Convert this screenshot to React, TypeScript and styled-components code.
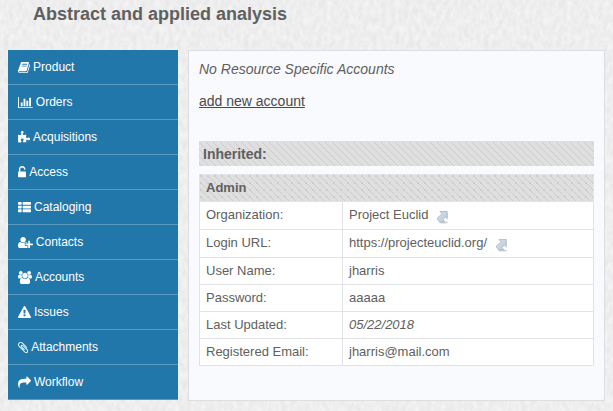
import React from "react";
import styled, { createGlobalStyle } from "styled-components";

const paper = `url("data:image/svg+xml,${encodeURIComponent(
  `<svg xmlns="http://www.w3.org/2000/svg" width="240" height="240"><filter id="n" color-interpolation-filters="sRGB"><feTurbulence type="fractalNoise" baseFrequency="0.22 0.12" numOctaves="3" stitchTiles="stitch"/><feColorMatrix values="0.08 0 0 0 0.893 0.08 0 0 0 0.893 0.08 0 0 0 0.893 0 0 0 0 1"/></filter><rect width="240" height="240" filter="url(#n)"/></svg>`
)}")`;

const hatch = `url("data:image/svg+xml,${encodeURIComponent(
  `<svg xmlns="http://www.w3.org/2000/svg" width="7" height="7"><rect width="7" height="7" fill="#dfdfdf"/><path d="M-1 -1L8 8M-1 6L1 8M6 -1L8 1" stroke="#cdcdcd" stroke-width="1"/></svg>`
)}")`;

const GlobalStyle = createGlobalStyle`
  *, *::before, *::after { box-sizing: border-box; }
  body {
    margin: 0;
    background: #eeeeee ${paper};
    color: #606060;
    font: 13px/17px "Liberation Sans", Arial, sans-serif;
  }
`;

const Page = styled.div`
  padding: 0 8px 10px;
`;

const Title = styled.h1`
  margin: 0;
  padding: 3px 0 25px 25px;
  font-size: 18px;
  line-height: 22px;
`;

const Columns = styled.div`
  display: grid;
  grid-template-columns: 170px 1fr;
  gap: 10px;
  align-items: start;
`;

const Nav = styled.nav`
  display: flex;
  flex-direction: column;
  background: #2277aa;
`;

const NavLink = styled.a`
  display: flex;
  align-items: center;
  gap: 3px;
  height: 35px;
  padding: 0 10px;
  border-bottom: 1px solid #5c9ac0;
  color: #ffffff;
  font-size: 12px;
  text-decoration: none;
`;

const Glyph = styled.svg`
  height: 13px;
  flex: none;
  fill: currentColor;
`;

const Panel = styled.main`
  display: flex;
  flex-direction: column;
  align-items: stretch;
  min-height: 351px;
  padding: 10px;
  border: 1px solid #dcdee2;
  background: #f9fafd;
`;

const Empty = styled.p`
  margin: 0 0 15px;
  font-size: 14px;
  font-style: italic;
`;

const AddLink = styled.a`
  align-self: flex-start;
  margin-bottom: 31px;
  color: #4a4a4a;
  font-size: 14px;
`;

const Inherited = styled.h2`
  margin: 0 0 8px;
  padding: 4px;
  background: ${hatch};
  border-top: 1px solid #dedede;
  font-size: 14px;
  line-height: 16px;
`;

const Details = styled.table`
  width: 100%;
  border-collapse: collapse;
  background: #ffffff;
  border: 1px solid #e2e3e6;
`;

const Head = styled.th`
  padding: 4px 6px 5px;
  border-bottom: 1px solid #e2e3e6;
  background: ${hatch};
  text-align: left;
`;

const Label = styled.th`
  width: 143px;
  padding: 4px 6px 5px;
  border: 1px solid #e2e3e6;
  font-weight: normal;
  text-align: left;
  vertical-align: top;
`;

const Value = styled.td<{ $italic?: boolean }>`
  padding: 4px 6px 5px;
  border: 1px solid #e2e3e6;
  font-style: ${(p) => (p.$italic ? "italic" : "normal")};
`;

const WithLink = styled.span`
  display: flex;
  align-items: flex-start;
  gap: 8px;
  height: 18px;
`;

const OpenLink = styled.a`
  display: block;
  height: 18px;
  padding-top: 4px;
`;

const OpenSvg = styled.svg`
  display: block;
  width: 14px;
  height: 14px;
`;

const OpenIcon = () => (
  <OpenSvg viewBox="0 0 14 14" aria-hidden="true">
    <defs>
      <linearGradient id="steel" x1="0" y1="0" x2="1" y2="1">
        <stop offset="0" stopColor="#dce6ed" />
        <stop offset="1" stopColor="#b3c4d0" />
      </linearGradient>
    </defs>
    <ellipse cx="7.500" cy="12.400" rx="4.500" ry="1" fill="#777777" opacity="0.35" />
    <path
      d="M4 1.500H11.300V8.800L9.300 7L7.200 9.300Q7 10.600 9 11.600Q5.500 13 3 11.200Q1 9.600 1.300 8L6 3.900Z"
      fill="url(#steel)"
      stroke="#a9b8c3"
      strokeWidth="0.8"
      strokeLinejoin="round"
    />
  </OpenSvg>
);

const items = [
  { name: "Product", x: 64, w: 1664, d: "M1703 478q40 57 18 129l-275 906q-19 64-76.500 107.500t-122.500 43.500h-923q-77 0-148.500-53.500t-99.500-131.500q-24-67-2-127 0-4 3-27t4-37q1-8-3-21.500t-3-19.500q2-11 8-21t16.500-23.500 16.500-23.500q23-38 45-91.500t30-91.500q3-10 .5-30t-.5-28q3-11 17-28t17-23q21-36 42-92t25-90q1-9-2.500-32t.5-28q4-13 22-30.500t22-22.500q19-26 42.500-84.500t27.500-96.500q1-8-3-25.500t-2-26.500q2-8 9-18t18-23 17-21q8-12 16.500-30.500t15-35 16-36 19.500-32 26.500-23.500 36-11.500 47.500 5.500l-1 3q38-9 51-9h761q74 0 114 56t18 130l-274 906q-36 119-71.500 153.500t-128.500 34.500h-869q-27 0-38 15-11 16-1 43 24 70 144 70h923q29 0 56-15.500t35-41.500l300-987q7-22 5-57 38 15 59 43zm-1064 2q-4 13 2 22.500t20 9.500h608q13 0 25.500-9.500t16.500-22.500l21-64q4-13-2-22.500t-20-9.500h-608q-13 0-25.500 9.500t-16.500 22.500zm-83 256q-4 13 2 22.500t20 9.500h608q13 0 25.500-9.500t16.500-22.500l21-64q4-13-2-22.500t-20-9.500h-608q-13 0-25.500 9.500t-16.500 22.500z" },
  { name: "Orders", x: 0, w: 2048, d: "M640 896v512h-256v-512h256zm384-512v1024h-256v-1024h256zm1024 1152v128h-2048v-1536h128v1408h1920zm-640-896v768h-256v-768h256zm384-384v1152h-256v-1152h256z" },
  { name: "Acquisitions", x: 64, w: 1664, d: "M1728 1098q0 81-44.500 135t-123.500 54q-41 0-77.500-17.500t-59-38-56.500-38-71-17.500q-110 0-110 124 0 39 16 115t15 115v5q-22 0-33 1-34 3-97.500 11.500t-115.500 13.500-98 5q-61 0-103-26.500t-42-83.500q0-37 17.500-71t38-56.500 38-59 17.500-77.500q0-79-54-123.500t-135-44.500q-84 0-143 45.500t-59 127.500q0 43 15 83t33.500 64.500 33.500 53 15 50.500q0 45-46 89-37 35-117 35-95 0-245-24-9-2-27.500-4t-27.500-4l-13-2q-1 0-3-1-2 0-2-1v-1024q2 1 17.500 3.500t34 5 21.500 3.500q150 24 245 24 80 0 117-35 46-44 46-89 0-22-15-50.500t-33.500-53-33.500-64.500-15-83q0-82 59-127.500t144-45.500q80 0 134 44.500t54 123.500q0 41-17.500 77.500t-38 59-38 56.500-17.500 71q0 57 42 83.500t103 26.500q64 0 180-15t163-17v2q-1 2-3.500 17.500t-5 34-3.500 21.500q-24 150-24 245 0 80 35 117 44 46 89 46 22 0 50.500-15t53-33.500 64.500-33.500 83-15q82 0 127.500 59t45.500 143z" },
  { name: "Access", x: 256, w: 1152, d: "M1312 768q40 0 68 28t28 68v576q0 40-28 68t-68 28h-960q-40 0-68-28t-28-68v-576q0-40 28-68t68-28h32v-320q0-185 131.500-316.500t316.500-131.500 316.500 131.500 131.500 316.500q0 26-19 45t-45 19h-64q-26 0-45-19t-19-45q0-106-75-181t-181-75-181 75-75 181v320h736z" },
  { name: "Cataloging", x: 0, w: 1792, d: "M512 1248v192q0 40-28 68t-68 28h-320q-40 0-68-28t-28-68v-192q0-40 28-68t68-28h320q40 0 68 28t28 68zm0-512v192q0 40-28 68t-68 28h-320q-40 0-68-28t-28-68v-192q0-40 28-68t68-28h320q40 0 68 28t28 68zm1280 512v192q0 40-28 68t-68 28h-960q-40 0-68-28t-28-68v-192q0-40 28-68t68-28h960q40 0 68 28t28 68zm-1280-1024v192q0 40-28 68t-68 28h-320q-40 0-68-28t-28-68v-192q0-40 28-68t68-28h320q40 0 68 28t28 68zm1280 512v192q0 40-28 68t-68 28h-960q-40 0-68-28t-28-68v-192q0-40 28-68t68-28h960q40 0 68 28t28 68zm0-512v192q0 40-28 68t-68 28h-960q-40 0-68-28t-28-68v-192q0-40 28-68t68-28h960q40 0 68 28t28 68z" },
  { name: "Contacts", x: 0, w: 2048, d: "M704 896q-159 0-271.500-112.500t-112.500-271.500 112.500-271.500 271.500-112.500 271.500 112.500 112.500 271.500-112.500 271.500-271.500 112.500zm960 128h352q13 0 22.500 9.500t9.500 22.500v192q0 13-9.500 22.500t-22.500 9.500h-352v352q0 13-9.500 22.500t-22.500 9.500h-192q-13 0-22.500-9.500t-9.500-22.500v-352h-352q-13 0-22.500-9.500t-9.500-22.500v-192q0-13 9.500-22.500t22.500-9.500h352v-352q0-13 9.500-22.500t22.500-9.500h192q13 0 22.500 9.500t9.500 22.500v352zm-736 224q0 52 38 90t90 38h256v238q-68 50-171 50h-874q-121 0-194-69t-73-190q0-53 3.500-103.500t14-109 26.500-108.500 43-97.500 62-81 85.500-53.500 111.500-20q19 0 39 17 79 61 154.500 91.500t164.500 30.500 164.500-30.500 154.500-91.500q20-17 39-17 132 0 217 96h-223q-52 0-90 38t-38 90v192z" },
  { name: "Accounts", x: 0, w: 1920, d: "M593 896q-162 5-265 128h-134q-82 0-138-40.500t-56-118.500q0-353 124-353 6 0 43.500 21t97.500 42.500 119 21.500q67 0 133-23-5 37-5 66 0 139 81 256zm1071 637q0 120-73 189.500t-194 69.500h-874q-121 0-194-69.500t-73-189.500q0-53 3.500-103.500t14-109 26.500-108.500 43-97.500 62-81 85.500-53.500 111.500-20q10 0 43 21.500t73 48 107 48 135 21.500 135-21.500 107-48 73-48 43-21.500q61 0 111.500 20t85.500 53.500 62 81 43 97.500 26.500 108.500 14 109 3.500 103.500zm-1024-1277q0 106-75 181t-181 75-181-75-75-181 75-181 181-75 181 75 75 181zm704 384q0 159-112.500 271.500t-271.500 112.500-271.500-112.500-112.500-271.500 112.500-271.500 271.500-112.500 271.500 112.500 112.500 271.500zm576 225q0 78-56 118.500t-138 40.500h-134q-103-123-265-128 81-117 81-256 0-29-5-66 66 23 133 23 59 0 119-21.500t97.500-42.500 43.500-21q124 0 124 353zm-128-609q0 106-75 181t-181 75-181-75-75-181 75-181 181-75 181 75 75 181z" },
  { name: "Issues", x: 0, w: 1792, d: "M1024 1375v-190q0-14-9.500-23.500t-22.500-9.500h-192q-13 0-22.500 9.500t-9.500 23.500v190q0 14 9.500 23.500t22.500 9.500h192q13 0 22.500-9.500t9.500-23.500zm-2-374l18-459q0-12-10-19-13-11-24-11h-220q-11 0-24 11-10 7-10 21l17 457q0 10 10 16.500t24 6.500h185q14 0 23.500-6.500t10.500-16.500zm-14-934l768 1408q35 63-2 126-17 29-46.500 46t-63.500 17h-1536q-34 0-63.500-17t-46.500-46q-37-63-2-126l768-1408q17-31 47-49t65-18 65 18 47 49z" },
  { name: "Attachments", x: 192, w: 1408, d: "M1596 1385q0 117-79 196t-196 79q-135 0-235-100l-777-776q-113-115-113-271 0-159 110-270t269-111q158 0 273 113l605 606q10 10 10 22 0 16-30.500 46.500t-46.500 30.500q-13 0-23-10l-606-607q-79-77-181-77-106 0-179 75t-73 181q0 105 76 181l776 777q63 63 145 63 64 0 106-42t42-106q0-82-63-145l-581-581q-26-24-60-24-29 0-48 19t-19 48q0 32 25 59l410 410q10 10 10 22 0 16-31 47t-47 31q-12 0-22-10l-410-410q-63-61-63-149 0-82 57-139t139-57q88 0 149 63l581 581q100 98 100 235z" },
  { name: "Workflow", x: 0, w: 1792, d: "M1792 640q0 26-19 45l-512 512q-19 19-45 19t-45-19-19-45v-256h-224q-98 0-175.500 6t-154 21.500-133 42.500-105.500 69.500-80 101-48.500 138.500-17.500 181q0 55 5 123 0 6 2.500 23.500t2.500 26.500q0 15-8.500 25t-23.500 10q-16 0-28-17-7-9-13-22t-13.500-30-10.500-24q-127-285-127-451 0-199 53-333 162-403 875-403h224v-256q0-26 19-45t45-19 45 19l512 512q19 19 19 45z" },
];

const rows = [
  { label: "Organization:", value: "Project Euclid", link: true },
  { label: "Login URL:", value: "https://projecteuclid.org/", link: true },
  { label: "User Name:", value: "jharris" },
  { label: "Password:", value: "aaaaa" },
  { label: "Last Updated:", value: "05/22/2018", italic: true },
  { label: "Registered Email:", value: "jharris@mail.com" },
];

export default function App() {
  return (
    <>
      <GlobalStyle />
      <Page>
        <Title>Abstract and applied analysis</Title>
        <Columns>
          <Nav aria-label="Resource sections">
            {items.map((item) => (
              <NavLink key={item.name} href="#">
                <Glyph viewBox={`${item.x} 0 ${item.w} 1792`} aria-hidden="true">
                  <path d={item.d} />
                </Glyph>
                {item.name}
              </NavLink>
            ))}
          </Nav>
          <Panel>
            <Empty>No Resource Specific Accounts</Empty>
            <AddLink href="#">add new account</AddLink>
            <Inherited>Inherited:</Inherited>
            <Details>
              <thead>
                <tr>
                  <Head colSpan={2}>Admin</Head>
                </tr>
              </thead>
              <tbody>
                {rows.map((row) => (
                  <tr key={row.label}>
                    <Label scope="row">{row.label}</Label>
                    <Value $italic={row.italic}>
                      {row.link ? (
                        <WithLink>
                          {row.value}
                          <OpenLink href="#" aria-label={`Open ${row.value}`}>
                            <OpenIcon />
                          </OpenLink>
                        </WithLink>
                      ) : (
                        row.value
                      )}
                    </Value>
                  </tr>
                ))}
              </tbody>
            </Details>
          </Panel>
        </Columns>
      </Page>
    </>
  );
}
